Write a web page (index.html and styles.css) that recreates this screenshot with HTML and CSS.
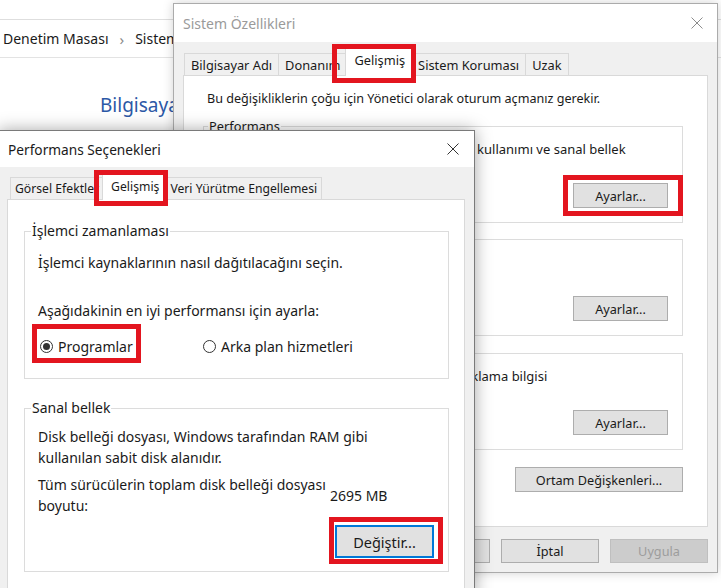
FILE: index.html
```html
<!DOCTYPE html>
<html lang="tr">
<head>
<meta charset="utf-8">
<title>Performans Seçenekleri</title>
<link rel="stylesheet" href="styles.css">
</head>
<body>
<div class="desktop">

  <div class="cp">
    <div class="cp-title"></div>
    <div class="cp-address">
      <span>Denetim Masası</span>
      <span class="cp-sep">›</span>
      <span>Sistem</span>
    </div>
    <div class="cp-main">
      <h1 class="cp-heading">Bilgisayarınızla ilgili temel bilgileri görüntüleyin</h1>
    </div>
  </div>

  <div class="win win-sys">
    <div class="titlebar">
      <span class="title">Sistem Özellikleri</span>
      <svg class="close" viewBox="0 0 12 12" width="12" height="12"><path d="M0.5 0.5L11.5 11.5M11.5 0.5L0.5 11.5"/></svg>
    </div>
    <div class="win-body">
      <div class="tabs">
        <div class="tab">Bilgisayar Adı</div>
        <div class="tab">Donanım</div>
        <div class="tab tab-on">Gelişmiş</div>
        <div class="tab">Sistem Koruması</div>
        <div class="tab">Uzak</div>
      </div>
      <div class="panel sys-panel">
        <p class="sys-note">Bu değişikliklerin çoğu için Yönetici olarak oturum açmanız gerekir.</p>
        <div class="group sys-group sys-group-1">
          <span class="legend">Performans</span>
          <p class="line">Görsel efektler, işlemci zamanlaması, bellek kullanımı ve sanal bellek</p>
          <div class="actions"><button class="btn btn-small">Ayarlar...</button></div>
        </div>
        <div class="group sys-group sys-group-2">
          <span class="legend">Kullanıcı Profilleri</span>
          <p class="line">Oturum açmanızla ilgili masaüstü ayarları</p>
          <div class="actions"><button class="btn btn-small">Ayarlar...</button></div>
        </div>
        <div class="group sys-group sys-group-3">
          <span class="legend">Başlangıç ve Kurtarma</span>
          <p class="line">Sistem başlangıcı, sistem hatası ve hata ayıklama bilgisi</p>
          <div class="actions"><button class="btn btn-small">Ayarlar...</button></div>
        </div>
        <div class="actions env-row"><button class="btn btn-env">Ortam Değişkenleri...</button></div>
      </div>
      <div class="footer">
        <button class="btn btn-foot">Tamam</button>
        <button class="btn btn-foot">İptal</button>
        <button class="btn btn-foot btn-disabled">Uygula</button>
      </div>
    </div>
  </div>

  <div class="win win-perf">
    <div class="titlebar">
      <span class="title">Performans Seçenekleri</span>
      <svg class="close" viewBox="0 0 12 12" width="12" height="12"><path d="M0.5 0.5L11.5 11.5M11.5 0.5L0.5 11.5"/></svg>
    </div>
    <div class="win-body">
      <div class="tabs">
        <div class="tab">Görsel Efektler</div>
        <div class="tab tab-on">Gelişmiş</div>
        <div class="tab">Veri Yürütme Engellemesi</div>
      </div>
      <div class="panel perf-panel">
        <div class="group perf-group cpu-group">
          <span class="legend">İşlemci zamanlaması</span>
          <p class="line">İşlemci kaynaklarının nasıl dağıtılacağını seçin.</p>
          <p class="line adjust">Aşağıdakinin en iyi performansı için ayarla:</p>
          <div class="radios">
            <label class="radio radio-programs"><span class="dot dot-on"></span>Programlar</label>
            <label class="radio"><span class="dot"></span>Arka plan hizmetleri</label>
          </div>
        </div>
        <div class="group perf-group vm-group">
          <span class="legend">Sanal bellek</span>
          <p class="line">Disk belleği dosyası, Windows tarafından RAM gibi<br>kullanılan sabit disk alanıdır.</p>
          <div class="size-row">
            <p class="line size-label">Tüm sürücülerin toplam disk belleği dosyası boyutu:</p>
            <span class="size-value">2695 MB</span>
          </div>
          <div class="actions"><button class="btn btn-change">Değiştir...</button></div>
        </div>
      </div>
    </div>
  </div>

  <div class="mark mark-sys-tab"></div>
  <div class="mark mark-sys-btn"></div>
  <div class="mark mark-perf-tab"></div>
  <div class="mark mark-radio"></div>
  <div class="mark mark-change"></div>
</div>
</body>
</html>
```

FILE: styles.css
```css
* { box-sizing: border-box; }

html, body {
  margin: 0;
  padding: 0;
  background: #fff;
}

body {
  font-family: "Noto Sans", "Open Sans", sans-serif;
  font-size: 14px;
  color: #1a1a1a;
}

.desktop {
  position: relative;
  width: 721px;
  height: 588px;
  overflow: hidden;
  background: #fff;
}

/* Control panel window in the background */
.cp {
  display: flex;
  flex-direction: column;
  height: 100%;
}
.cp-title {
  height: 20px;
  border-bottom: 1px solid #dedede;
}
.cp-address {
  height: 38px;
  border-bottom: 1px solid #e3e3e3;
  display: flex;
  align-items: center;
  gap: 11px;
  padding-left: 3px;
  font-size: 14px;
  color: #1a1a1a;
}
.cp-sep {
  color: #8a8a8a;
  font-size: 15px;
}
.cp-main {
  padding: 33px 0 0 100px;
}
.cp-heading {
  margin: 0;
  font-weight: normal;
  font-size: 19px;
  line-height: 28px;
  color: #2c58a6;
  white-space: nowrap;
}

/* Dialog windows (free placement on the desktop) */
.win {
  position: absolute;
  display: flex;
  flex-direction: column;
  background: #f0f0f0;
}
.win-sys {
  left: 173px;
  top: 3px;
  width: 545px;
  height: 570px;
  border: 1px solid #ababab;
  box-shadow: 0 0 10px rgba(0, 0, 0, 0.18);
  font-size: 12.8px;
}
.win-perf {
  left: -2px;
  top: 130px;
  width: 477px;
  height: 470px;
  border: 1px solid #7a7a7a;
  box-shadow: 0 0 16px rgba(0, 0, 0, 0.35);
}

.titlebar {
  height: 38px;
  background: #fff;
  display: flex;
  align-items: center;
  justify-content: space-between;
  padding: 0 14px 0 9px;
  flex: none;
}
.win-perf .titlebar {
  height: 36px;
  padding-left: 9px;
  padding-right: 15px;
}
.title { font-size: 14px; }
.win-perf .title { font-size: 13.7px; }
.win-sys .title { color: #9a9a9a; }
.close {
  fill: none;
  stroke: #333;
  stroke-width: 1;
}
.win-sys .close { stroke: #8c8c8c; }

.win-body {
  flex: 1;
  display: flex;
  flex-direction: column;
  padding: 5px 9px 0 9px;
}
.win-perf .win-body { padding: 7px 9px 0 8px; }

/* Tabs */
.tabs {
  display: flex;
  align-items: flex-end;
  height: 29px;
  margin-bottom: -1px;
  padding-left: 1px;
  position: relative;
  z-index: 1;
  flex: none;
}
.win-perf .tabs { height: 26px; padding-left: 3px; }
.tab {
  height: 22px;
  margin-bottom: 1px;
  padding: 0 6px;
  border: 1px solid #d9d9d9;
  border-bottom: none;
  background: #f0f0f0;
  display: flex;
  align-items: center;
  white-space: nowrap;
  font-size: 12.8px;
}
.tab + .tab { border-left: none; }
.tab-on {
  height: 29px;
  margin: 0 -2px;
  padding: 0 8px 4px;
  background: #fff;
  border-left: 1px solid #d9d9d9 !important;
  position: relative;
  z-index: 2;
}
.win-perf .tab { padding: 0 4px; font-size: 12.2px; }
.win-perf .tab-on { height: 26px; padding: 0 8px 2px; }

.panel {
  background: #fff;
  border: 1px solid #d9d9d9;
}
.sys-panel {
  height: 452px;
  padding: 12px 24px 0 19px;
  flex: none;
}
.perf-panel {
  flex: 1;
  padding: 31px 15px 0 16px;
}

p { margin: 0; }
.line { line-height: 21px; }
.sys-note {
  line-height: 21px;
  margin-left: 4px;
  white-space: nowrap;
  font-size: 12.6px;
}

/* Group boxes */
.group {
  position: relative;
  border: 1px solid #dcdcdc;
  display: flex;
  flex-direction: column;
}
.legend {
  position: absolute;
  top: -11px;
  padding: 0 1px;
  line-height: 20px;
  background: #fff;
  white-space: nowrap;
}
.sys-group {
  height: 97px;
  padding: 12px 14px 14px 6px;
}
.sys-group .legend { left: 4px; }
.sys-group-1 { margin-top: 17px; }
.sys-group-2 { margin-top: 16px; }
.sys-group-3 { margin-top: 17px; }
.sys-group .line { white-space: nowrap; font-size: 13px; }
.sys-group .actions { margin-top: auto; }

.actions {
  display: flex;
  justify-content: flex-end;
}
.env-row { margin-top: 17px; }

.perf-group { padding: 0 14px 0 13px; }
.perf-group .legend { left: 6px; }
.cpu-group {
  height: 148px;
  padding-top: 20px;
}
.adjust { margin-top: 27px; }
.radios {
  display: flex;
  margin-top: 15px;
  line-height: 21px;
}
.radio {
  display: flex;
  align-items: center;
  gap: 5px;
}
.radio-programs {
  padding-left: 2px;
  width: 165px;
}
.dot {
  width: 13px;
  height: 13px;
  border: 1px solid #333;
  border-radius: 50%;
  display: flex;
  align-items: center;
  justify-content: center;
}
.dot-on::after {
  content: "";
  width: 7px;
  height: 7px;
  border-radius: 50%;
  background: #333;
}

.vm-group {
  height: 164px;
  margin-top: 29px;
  padding-top: 17px;
  padding-bottom: 13px;
}
.size-row {
  display: flex;
  align-items: center;
  margin-top: 6px;
}
.size-label { width: 292px; }
.size-value { line-height: 21px; }
.vm-group .actions { margin-top: auto; }

/* Buttons */
.btn {
  font-family: inherit;
  font-size: 14px;
  color: #1a1a1a;
  background: #e1e1e1;
  border: 1px solid #adadad;
  padding: 0;
  margin: 0;
  display: flex;
  align-items: center;
  justify-content: center;
}
.win-sys .btn { font-size: 12.7px; }
.btn-small { width: 95px; height: 25px; }
.btn-env { width: 168px; height: 25px; }
.btn-foot { width: 98px; height: 24px; }
.btn-disabled {
  background: #cccccc;
  border-color: #bfbfbf;
  color: #9d9d9d !important;
}
.btn-change {
  width: 99px;
  height: 33px;
  border: 2px solid #0078d7;
  font-size: 14.5px;
}

.footer {
  display: flex;
  justify-content: flex-end;
  gap: 11px;
  padding: 12px 0 0 0;
}

/* Red highlight frames drawn over the screenshot */
.mark {
  position: absolute;
  border: 5px solid #e3151f;
  z-index: 10;
}
.mark-sys-tab { left: 332px; top: 44px; width: 84px; height: 39px; }
.mark-sys-btn { left: 563px; top: 175px; width: 120px; height: 41px; }
.mark-perf-tab { left: 94px; top: 170px; width: 74px; height: 36px; }
.mark-radio { left: 32px; top: 324px; width: 109px; height: 39px; }
.mark-change { left: 329px; top: 517px; width: 114px; height: 47px; }
```
